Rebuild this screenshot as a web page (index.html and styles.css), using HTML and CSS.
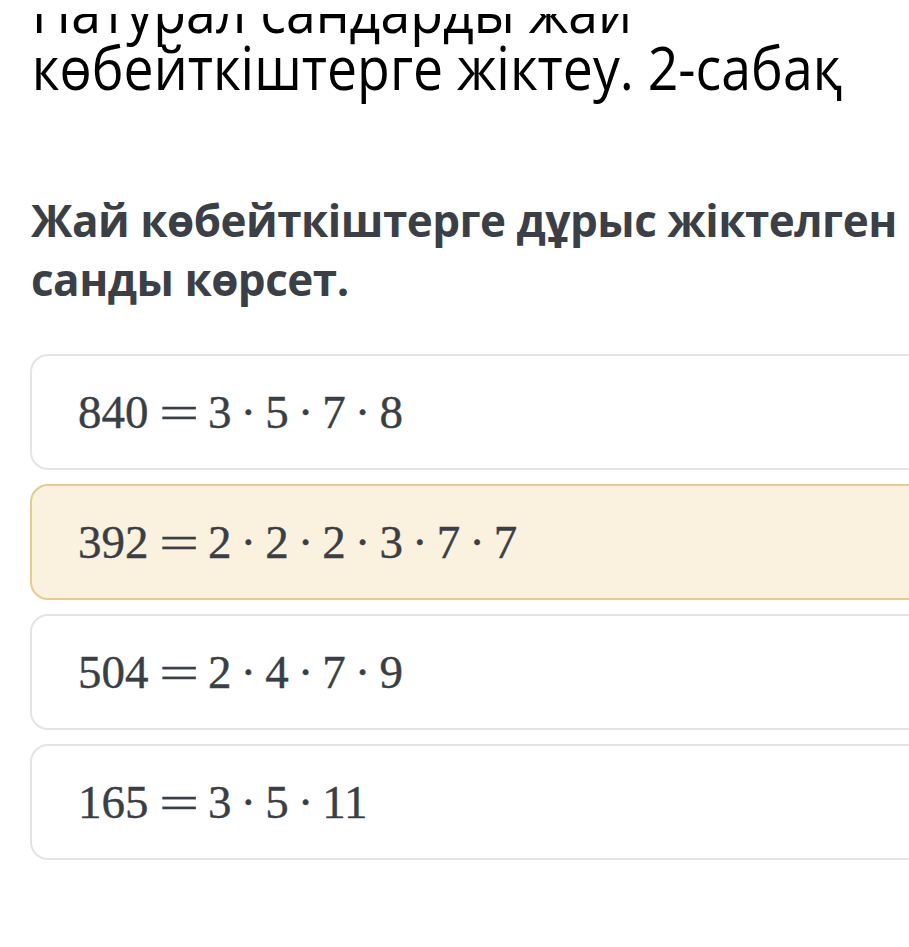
FILE: index.html
```html
<!DOCTYPE html>
<html lang="kk">
<head>
<meta charset="utf-8">
<link rel="stylesheet" href="styles.css">
</head>
<body>
<div class="topbar"></div>
<div class="page">
  <h1 class="title">Натурал сандарды жай көбейткіштерге жіктеу. 2-сабақ</h1>
  <h2 class="question">Жай көбейткіштерге дұрыс жіктелген санды көрсет.</h2>
  <div class="options">
    <div class="option"><span class="math">840<span class="op">=</span>3<span class="dot">·</span>5<span class="dot">·</span>7<span class="dot">·</span>8</span></div>
    <div class="option selected"><span class="math">392<span class="op">=</span>2<span class="dot">·</span>2<span class="dot">·</span>2<span class="dot">·</span>3<span class="dot">·</span>7<span class="dot">·</span>7</span></div>
    <div class="option"><span class="math">504<span class="op">=</span>2<span class="dot">·</span>4<span class="dot">·</span>7<span class="dot">·</span>9</span></div>
    <div class="option"><span class="math">165<span class="op">=</span>3<span class="dot">·</span>5<span class="dot">·</span>11</span></div>
  </div>
</div>
</body>
</html>
```
FILE: styles.css
```css
html, body {
  margin: 0;
  padding: 0;
  background: #ffffff;
  overflow: hidden;
}
.topbar {
  position: fixed;
  top: 0;
  left: 0;
  right: 0;
  height: 14px;
  background: #ffffff;
  z-index: 2;
}
.page {
  padding-left: 30px;
  margin-right: -40px;
}
.title {
  margin: -18px 0 0 0;
  padding-left: 2px;
  font-family: "Open Sans", sans-serif;
  font-weight: 400;
  font-size: 60px;
  line-height: 57px;
  color: #000;
  width: 960px;
  transform: scaleX(0.893);
  transform-origin: 0 0;
}
.question {
  margin: 95px 0 0 0;
  padding-left: 1px;
  font-family: "Open Sans", sans-serif;
  font-weight: 700;
  font-size: 44px;
  letter-spacing: -0.5px;
  line-height: 59px;
  color: #3b4047;
  width: 880px;
}
.options {
  margin-top: 45px;
  display: flex;
  flex-direction: column;
  gap: 14px;
}
.option {
  height: 112px;
  border: 2px solid #e2e5e6;
  border-radius: 18px;
  background: #fff;
  display: flex;
  align-items: center;
  padding-left: 46px;
}
.option.selected {
  background: #faf1df;
  border-color: #e7cb8e;
}
.math {
  font-family: "Liberation Serif", serif;
  font-size: 47px;
  color: #3a3f45;
  -webkit-text-stroke: 0.4px #3a3f45;
  white-space: nowrap;
  display: flex;
  align-items: baseline;
}
.op {
  display: inline-block;
  transform: scaleX(1.5);
  margin: 0 16px 0 17px;
}
.dot {
  display: inline-block;
  margin: 0 9px;
}
```
